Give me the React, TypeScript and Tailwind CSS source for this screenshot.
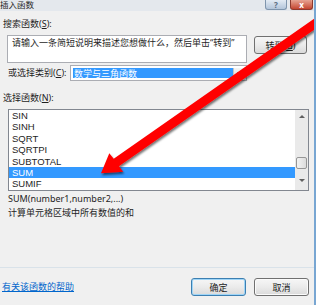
import React from 'react';

const items = ['SIN', 'SINH', 'SQRT', 'SQRTPI', 'SUBTOTAL', 'SUM', 'SUMIF'];

const Btn = ({ children, primary }: { children: React.ReactNode; primary?: boolean }) => (
  <div
    className={`flex h-[18px] w-[55px] items-center justify-center rounded-[3px] border bg-gradient-to-b from-[#f6f6f6] via-[#ebebeb] to-[#dadada] text-[9px] leading-none text-[#1b1b1b] ${
      primary ? 'border-[#3c7fb1] shadow-[inset_0_0_0_1px_#9fd5f7]' : 'border-[#707070] shadow-[inset_0_0_0_1px_#fbfbfb]'
    }`}
  >
    {children}
  </div>
);

export default function App() {
  return (
    <div
      className="relative flex h-[305px] w-[316px] flex-col overflow-hidden border-r-2 border-[#78a6d2] bg-[#f0f0f0] text-[9px] text-[#1e1e1e]"
      style={{ fontFamily: '"Noto Sans", "Noto Sans CJK SC", sans-serif' }}
    >
      {/* title bar */}
      <div className="flex h-[11px] items-start justify-between bg-[#e4e8ed]">
        <span className="text-[8.5px] leading-[10px]">插入函数</span>
        <div className="flex gap-[3px] pr-[1px]">
          <div className="flex h-[10px] w-[22px] items-center justify-center rounded-b-[3px] border border-t-0 border-[#7f95ad] bg-gradient-to-b from-[#e3ebf4] to-[#b3c5da] text-[8px] font-bold leading-none text-[#5a6d82]">
            ?
          </div>
          <div className="flex h-[10px] w-[23px] items-center justify-center rounded-b-[3px] border border-t-0 border-[#8e3a2e] bg-gradient-to-b from-[#e6a392] to-[#c4442f] text-[8px] font-bold leading-none text-white">
            x
          </div>
        </div>
      </div>

      <div className="mt-[7px] ml-[3px] h-[12px] leading-[12px]">
        搜索函数(<u>S</u>):
      </div>

      <div className="mt-[5px] flex items-start">
        <div className="ml-[7px] h-[28px] w-[240px] border border-[#abadb3] bg-white px-[4px] pt-[1px] leading-[12px]">
          请输入一条简短说明来描述您想做什么，然后单击“转到”
        </div>
        <div className="mt-[1px] ml-[7px]">
          <div className="flex h-[18px] w-[53px] items-center justify-center rounded-[3px] border border-[#707070] bg-gradient-to-b from-[#f6f6f6] via-[#ebebeb] to-[#dadada] leading-none">
            转到(<u>G</u>)
          </div>
        </div>
      </div>

      <div className="mt-[2px] flex h-[16px] items-center">
        <span className="ml-[8px] w-[62px] whitespace-nowrap">
          或选择类别(<u>C</u>):
        </span>
        <div className="flex h-[16px] w-[177px] items-stretch border border-[#abadb3] bg-white p-[2px] pr-0">
          <div className="flex flex-1 items-center bg-[#3399ff] pl-[1px] leading-none text-white">数学与三角函数</div>
          <div className="flex w-[13px] items-center justify-center border-l border-[#c5c5c5] bg-gradient-to-b from-[#f4f4f4] to-[#dcdcdc]">
            <div className="h-0 w-0 border-x-[3px] border-t-[3px] border-x-transparent border-t-[#333]" />
          </div>
        </div>
      </div>

      <div className="mt-[11px] ml-[3px] h-[12px] leading-[12px]">
        选择函数(<u>N</u>):
      </div>

      <div className="mt-[5px] ml-[8px] flex h-[82px] w-[301px] border border-[#828790] bg-white">
        <div className="flex flex-1 flex-col" style={{ fontFamily: '"Liberation Sans", sans-serif' }}>
          {items.map((it) => (
            <div
              key={it}
              className={`flex h-[11.4px] items-center pl-[3px] text-[9.5px] leading-none ${
                it === 'SUM' ? 'bg-[#3399ff] text-white' : ''
              }`}
            >
              {it}
            </div>
          ))}
        </div>
        <div className="flex w-[13px] flex-col items-center bg-[#eaeaea]">
          <div className="mt-[5px] h-0 w-0 border-x-[3px] border-b-[3px] border-x-transparent border-b-[#606060]" />
          <div className="mt-[39px] h-[12px] w-[11px] rounded-[2px] border border-[#969696] bg-gradient-to-r from-[#f3f3f3] to-[#dcdcdc]" />
          <div className="mt-[10px] h-0 w-0 border-x-[3px] border-t-[3px] border-x-transparent border-t-[#606060]" />
        </div>
      </div>

      <div className="mt-[1px] ml-[8px] leading-[14px]">
        <div>SUM(number1,number2,...)</div>
        <div>计算单元格区域中所有数值的和</div>
      </div>

      <div className="mt-[47px] h-px bg-[#d9e2e9]" />

      <div className="mt-[10px] flex items-center pr-[5px]">
        <span className="ml-[2px] text-[#0066cc] underline">有关该函数的帮助</span>
        <div className="ml-auto flex gap-[8px]">
          <Btn primary>确定</Btn>
          <Btn>取消</Btn>
        </div>
      </div>

      {/* red annotation arrow */}
      <svg className="pointer-events-none absolute inset-0" width="316" height="305" viewBox="0 0 316 305">
        <defs>
          <filter id="sh" x="-10%" y="-10%" width="130%" height="130%">
            <feDropShadow dx="1" dy="2" stdDeviation="1.2" floodColor="#000" floodOpacity="0.55" />
          </filter>
        </defs>
        <polygon
          points="101,173.3 109.3,153.3 113.7,158.8 326.9,9.8 332.1,17.2 118.9,166.2 123.3,171.7"
          fill="#ff0000"
          filter="url(#sh)"
        />
      </svg>
    </div>
  );
}
